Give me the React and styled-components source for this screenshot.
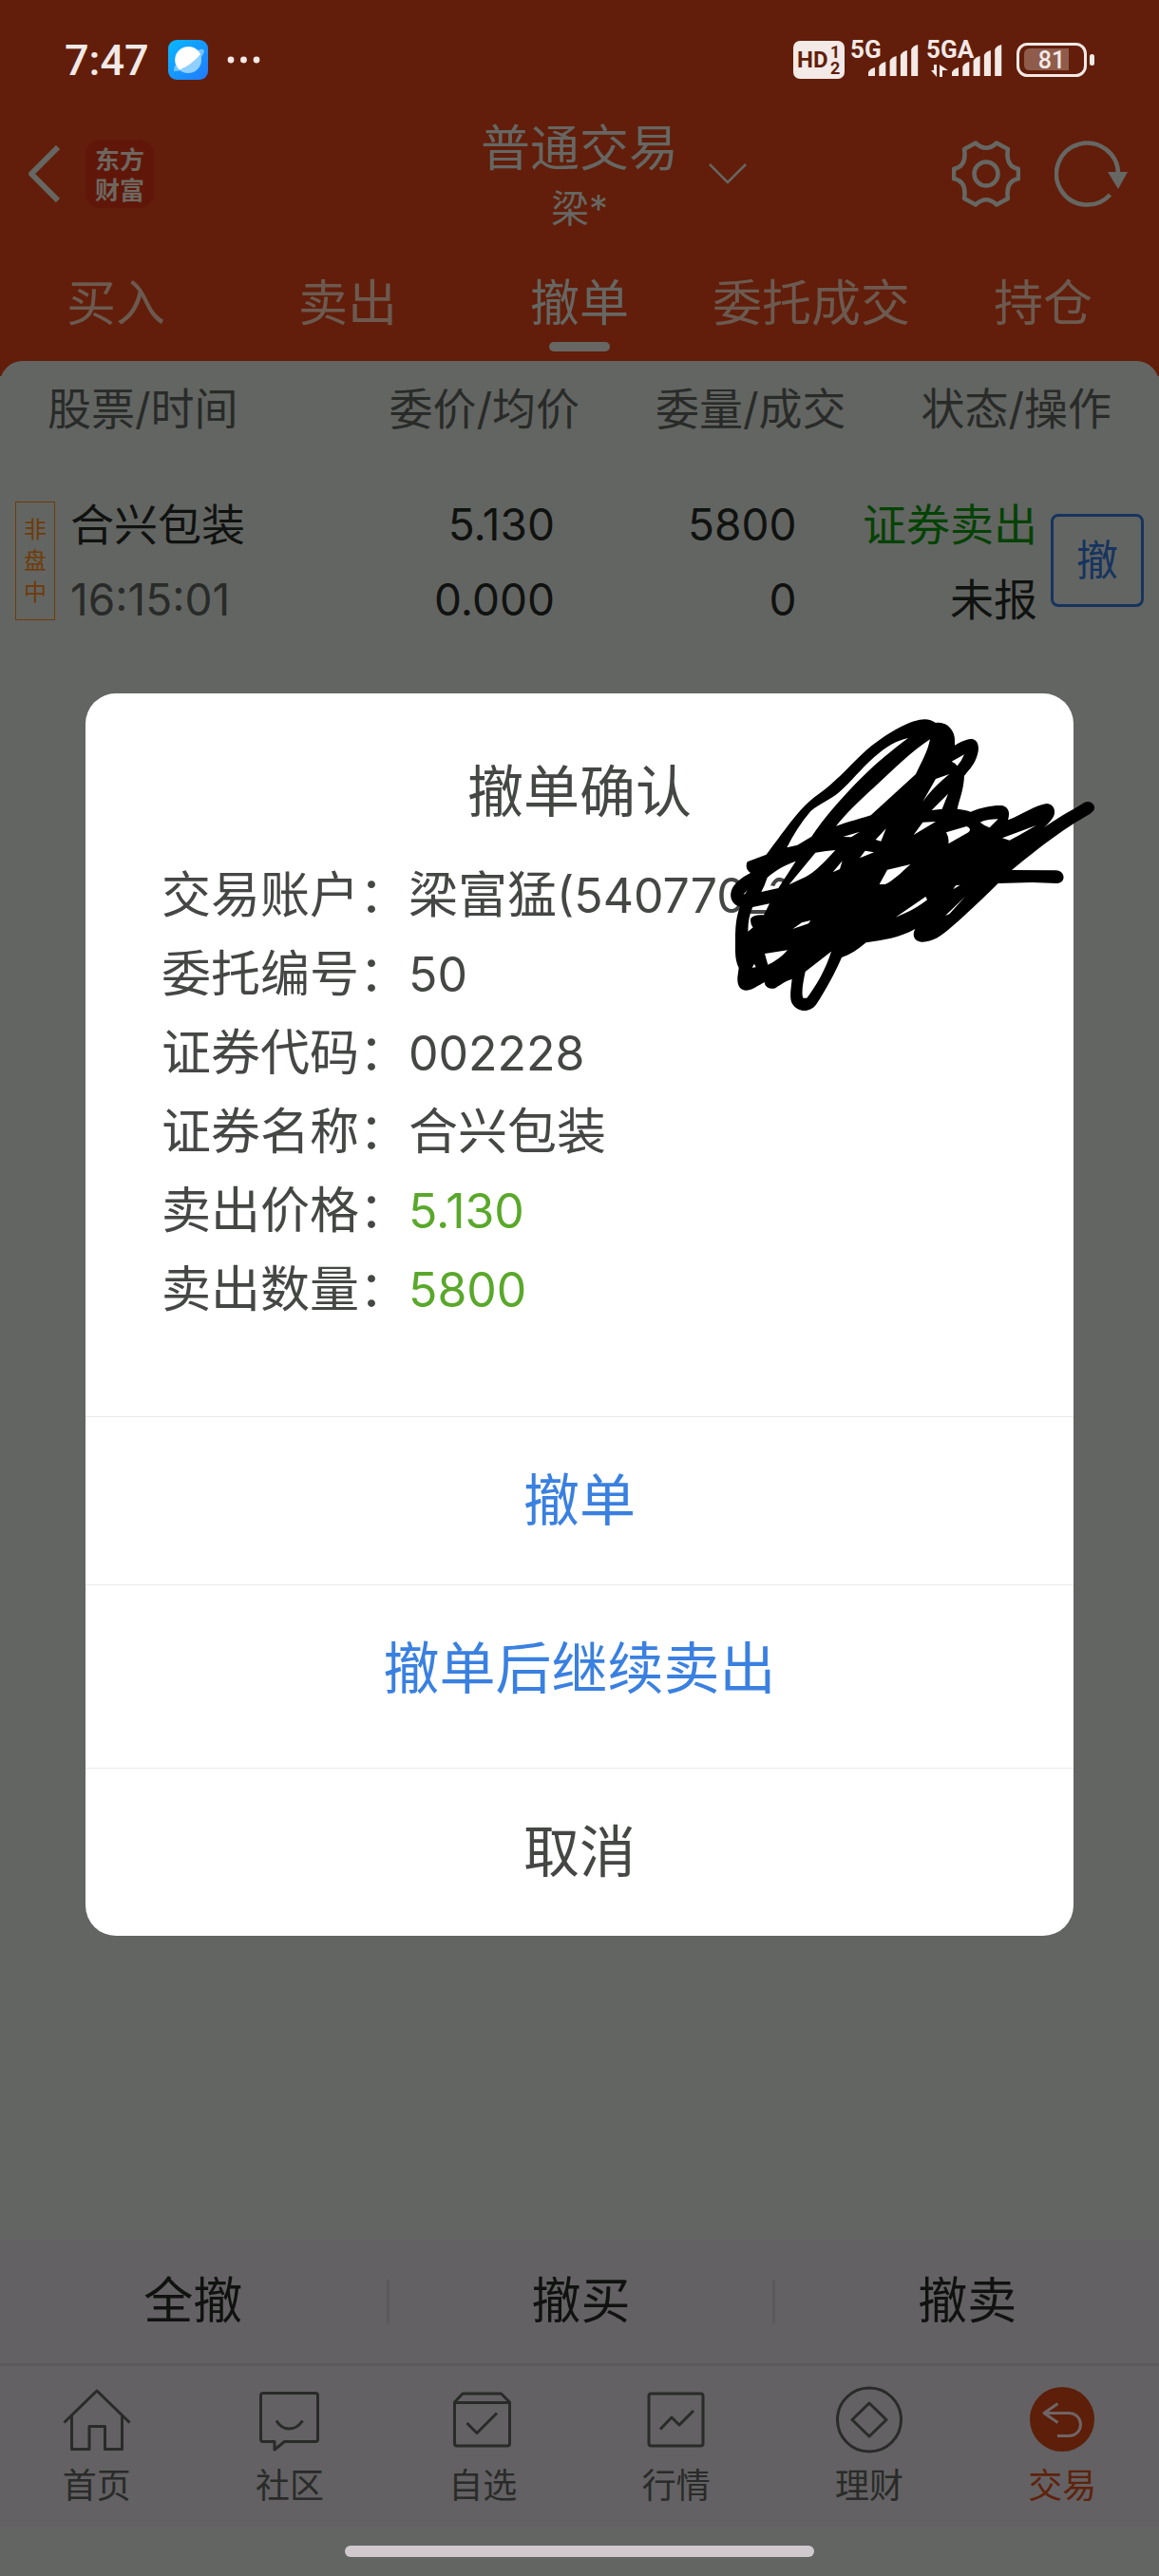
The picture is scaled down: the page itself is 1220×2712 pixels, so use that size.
import React from "react";
import styled, { createGlobalStyle, css } from "styled-components";

const color = {
  brand: "#621e0a",
  surface: "#636562",
  bar: "#636163",
  barLine: "#5b595b",
  onBrand: "#666763",
  onBrandDim: "#6c5a50",
  muted: "#292b29",
  ink: "#101210",
  sell: "#054205",
  link: "#16345f",
  tag: "#6f3b07",
  dialogText: "#444744",
  dialogSell: "#5aa82b",
  dialogLink: "#3a80e0",
  status: "#f3e9e6",
};

const GlobalStyle = createGlobalStyle`
  *, *::before, *::after { box-sizing: border-box; }
  body {
    margin: 0;
    background: ${color.surface};
    color: ${color.ink};
    font-family: Inter, "Noto Sans CJK SC", sans-serif;
  }
  button { font: inherit; color: inherit; background: none; border: 0; padding: 0; }
  svg { display: block; flex: none; }
`;

const Page = styled.div`
  display: flex;
  flex-direction: column;
  min-height: 100vh;
`;

const Top = styled.header`
  background: ${color.brand};
  color: ${color.onBrand};
  padding-bottom: 16px;
`;

const StatusBar = styled.div`
  display: flex;
  align-items: center;
  height: 120px;
  padding: 6px 68px 0;
  color: ${color.status};
  font-family: Roboto, sans-serif;
`;

const Clock = styled.time`
  font-size: 45px;
  font-weight: 500;
  margin-right: 20px;
`;

const StatusIcons = styled.div`
  display: flex;
  align-items: center;
  gap: 6px;
  margin-left: auto;
`;

const MoreDots = styled.svg`
  margin-left: 20px;
`;

const TitleBar = styled.div`
  display: grid;
  grid-template-columns: 1fr auto 1fr;
  align-items: center;
  height: 126px;
`;

const TitleLeft = styled.div`
  display: flex;
  align-items: center;
  gap: 26px;
  padding-left: 28px;
`;

const Logo = styled.div`
  width: 72px;
  height: 72px;
  padding: 4px 0;
  border-radius: 16px;
  background: #601709;
  color: #6e6760;
  font-family: "Noto Sans CJK SC", sans-serif;
  font-size: 26px;
  font-weight: 700;
  line-height: 32px;
  text-align: center;
`;

const TitleText = styled.div`
  text-align: center;
`;

const Title = styled.h1`
  margin: 0;
  font-size: 52px;
  font-weight: 400;
  line-height: 74px;
`;

const Account = styled.div`
  font-size: 40px;
  line-height: 52px;
`;

const TitleRight = styled.div`
  display: flex;
  align-items: center;
  padding: 0 32px;
`;

const Tools = styled.div`
  display: flex;
  gap: 36px;
  margin-left: auto;
`;

const Tabs = styled.nav`
  display: grid;
  grid-template-columns: repeat(5, 1fr);
  padding-top: 42px;
`;

const Tab = styled.button`
  display: flex;
  flex-direction: column;
  align-items: center;
  gap: 8px;
  padding-bottom: 10px;
  font-size: 52px;
  line-height: 64px;
  white-space: nowrap;
  color: ${(p) => (p.$active ? color.onBrand : color.onBrandDim)};

  &::after {
    content: "";
    width: 64px;
    height: 10px;
    border-radius: 5px;
    background: ${(p) => (p.$active ? color.onBrand : "transparent")};
  }
`;

const Content = styled.main`
  flex: 1;
  margin-top: -16px;
  border-radius: 24px 24px 0 0;
  background: ${color.surface};
`;

const Orders = styled.table`
  width: 100%;
  table-layout: fixed;
  border-collapse: collapse;
`;

const HeadCell = styled.th`
  width: ${(p) => p.$width};
  height: 100px;
  padding: 0 ${(p) => p.$end || 0}px 0 ${(p) => p.$start || 0}px;
  font-size: 46px;
  font-weight: 400;
  line-height: 64px;
  text-align: ${(p) => (p.$start ? "left" : "right")};
  white-space: nowrap;
  color: ${color.muted};
`;

const Cell = styled.td`
  height: 220px;
  padding: 0 ${(p) => p.$end || 0}px 0 0;
  text-align: right;
  white-space: nowrap;
`;

const CellRow = styled.div`
  display: flex;
  align-items: center;
  gap: ${(p) => p.$gap}px;
  ${(p) => p.$end && css`justify-content: flex-end;`}
  ${(p) => p.$start && css`padding-left: ${p.$start}px; text-align: left;`}
`;

const Line = styled.span`
  display: block;
  font-size: 46px;
  line-height: 79px;
  color: ${(p) => p.$color || color.ink};
`;

const Lines = styled.div`
  padding-top: 4px;
`;

const Session = styled.span`
  width: 42px;
  padding: 12px 8px;
  border: 1px solid ${color.tag};
  color: ${color.tag};
  font-size: 24px;
  line-height: 33px;
  text-align: center;
  white-space: normal;
`;

const CancelButton = styled.button`
  width: 98px;
  height: 98px;
  border: 3px solid ${color.link};
  border-radius: 8px;
  color: ${color.link};
  font-size: 44px;
  line-height: 64px;
`;

const BulkActions = styled.div`
  display: grid;
  grid-template-columns: repeat(3, 1fr);
  height: 130px;
  padding: 42px 0;
  background: ${color.bar};
`;

const BulkButton = styled.button`
  font-size: 52px;
  line-height: 46px;

  & + & { border-left: 3px solid ${color.barLine}; }
`;

const BottomNav = styled.nav`
  display: grid;
  grid-template-columns: repeat(6, 1fr);
  border-top: 3px solid ${color.barLine};
  background: ${color.bar};
`;

const NavItem = styled.a`
  display: flex;
  flex-direction: column;
  align-items: center;
  gap: 8px;
  padding: 21px 0 18px;
  font-size: 36px;
  line-height: 50px;
  text-decoration: none;
  color: ${(p) => (p.$active ? "#5f220c" : color.muted)};
`;

const HomeArea = styled.div`
  display: flex;
  justify-content: center;
  padding: 20px 0;

  &::after {
    content: "";
    width: 494px;
    height: 12px;
    border-radius: 6px;
    background: #cfc9ce;
  }
`;

const Overlay = styled.div`
  position: fixed;
  inset: 0;
  display: flex;
  align-items: center;
  padding: 56px 90px 0;
`;

const Dialog = styled.section`
  position: relative;
  width: 100%;
  border-radius: 32px;
  background: #fff;
  color: ${color.dialogText};
`;

const DialogBody = styled.div`
  padding: 64px 80px 92px;
`;

const DialogTitle = styled.h2`
  margin: 0 0 27px;
  font-size: 59px;
  font-weight: 400;
  line-height: 80px;
  text-align: center;
`;

const Details = styled.dl`
  display: grid;
  grid-template-columns: 260px 1fr;
  grid-auto-rows: 83px;
  margin: 0;
  font-size: 52px;
  line-height: 83px;
  white-space: nowrap;
`;

const Label = styled.dt``;

const Value = styled.dd`
  margin: 0;
  color: ${(p) => (p.$sell ? color.dialogSell : "inherit")};
`;

const Digits = styled.span`
  font-size: 50px;
  line-height: 50px;
`;

const DialogButton = styled.button`
  display: block;
  width: 100%;
  padding: 48px 0 ${(p) => (p.$tall ? 64 : 48)}px;
  border-top: 1px solid #e9e9e9;
  font-size: 59px;
  line-height: 80px;
  color: ${(p) => (p.$primary ? color.dialogLink : "inherit")};
`;

const Scribble = styled.svg`
  position: absolute;
  top: -11px;
  right: -50px;
  pointer-events: none;
`;

const BrowserIcon = () => (
  <svg width="42" height="42" viewBox="0 0 42 42">
    <defs>
      <linearGradient id="sky" x1="0" y1="0" x2="1" y2="1">
        <stop offset="0" stopColor="#08b8ff" />
        <stop offset="1" stopColor="#2379ff" />
      </linearGradient>
    </defs>
    <rect width="42" height="42" rx="9" fill="url(#sky)" />
    <circle cx="21" cy="21" r="14" fill="#8fd0ff" />
    <path d="M6 33 Q6 27 10 24 L31 11 Q38 8 38 12 Q36 18 31 22 Q16 34 6 33Z" fill="#8fd0ff" opacity=".8" />
    <path d="M12 31.5 A14 14 0 1 1 34 15 Q25 26 12 31.5Z" fill="#fff" />
  </svg>
);

const Dots = () => (
  <MoreDots width="36" height="8" viewBox="0 0 36 8" fill="currentColor">
    <circle cx="4" cy="4" r="3.4" />
    <circle cx="17.5" cy="4" r="3.4" />
    <circle cx="31" cy="4" r="3.4" />
  </MoreDots>
);

const HdBadge = () => (
  <svg width="54" height="40" viewBox="0 0 54 40" fontFamily="Roboto, sans-serif" fontWeight="700" fill={color.brand}>
    <rect width="54" height="40" rx="7" fill={color.status} />
    <text x="4" y="28" fontSize="24">HD</text>
    <text x="39" y="18" fontSize="18">1</text>
    <text x="39" y="35" fontSize="18">2</text>
  </svg>
);

const Signal = ({ label, width, bars, transfer }) => {
  const heights = [9, 15, 21, 27, 33];
  return (
    <svg width={width} height="56" viewBox={`0 -8 ${width} 56`} fill="currentColor">
      <text x="0" y="18" fontSize="26" fontWeight="700" fontFamily="Roboto, sans-serif">{label}</text>
      {heights.map((h, i) => {
        const x = bars + i * 11.3;
        return <path key={h} d={`M${x} 37 v${-(h - 5)} q2 -4 7 -5 v${h} z`} />;
      })}
      {transfer && <path d="M5 31 l6 7 v-13 h-3 v6z M14 25 v13 h3 v-7 h6z" />}
    </svg>
  );
};

const Battery = () => (
  <svg width="82" height="36" viewBox="0 0 82 36">
    <rect x="1.5" y="1.5" width="71" height="33" rx="10" fill="none" stroke={color.status} strokeWidth="3" />
    <path d="M14 6 H55 V29 H14 Q8 29 8 23 V12 Q8 6 14 6Z" fill="#8f5c4c" />
    <rect x="77" y="12" width="5" height="12" rx="2.5" fill={color.status} />
    <text x="37" y="27" fontSize="25" fontWeight="500" textAnchor="middle" fontFamily="Roboto, sans-serif" fill={color.status}>81</text>
  </svg>
);

const BackIcon = () => (
  <svg width="36" height="60" viewBox="0 0 36 60" fill="none" stroke="currentColor" strokeWidth="6">
    <path d="M33 2 L5 30 L33 58" strokeLinejoin="round" />
  </svg>
);

const DownIcon = () => (
  <svg width="40" height="24" viewBox="0 0 40 24" fill="none" stroke="currentColor" strokeWidth="2.5">
    <path d="M1 2 L20 21 L39 2" />
  </svg>
);

const GearIcon = () => (
  <svg width="72" height="72" viewBox="0 0 72 72" fill="none" stroke="currentColor" strokeWidth="4.5" strokeLinejoin="round">
    <path d="M25 3.5 Q36 14 47 3.5 L59 10 Q56 28 70 31 V41 Q56 44 59 62 L47 68.5 Q36 58 25 68.5 L13 62 Q16 44 2 41 V31 Q16 28 13 10Z" />
    <circle cx="36" cy="36" r="12.5" />
  </svg>
);

const RefreshIcon = () => (
  <svg width="78" height="72" viewBox="0 0 78 72" fill="none" stroke="currentColor" strokeWidth="4.5">
    <path d="M67 36 A32.5 32.5 0 1 0 58.5 58" />
    <path d="M56 34 H77 L67 52Z" fill="currentColor" stroke="none" />
  </svg>
);

const navShapes = {
  home: <path d="M1.5 38.5 L36 5 L70.5 38.5 M9.5 31 V66.5 H28 V42.5 H44.5 V66.5 H62.5 V31" />,
  community: (
    <>
      <path d="M8 7.5 H63 Q65.5 7.5 65.5 10 V56 Q65.5 58.5 63 58.5 H30.5 L20 67 V58.5 H8 Q5.5 58.5 5.5 56 V10 Q5.5 7.5 8 7.5Z" />
      <path d="M22 36.5 Q27 45 35.5 45 Q44 45 49.5 36.5" />
    </>
  ),
  watch: (
    <>
      <path d="M6.5 17 L15 8 H55.5 L64.5 17 V60.5 Q64.5 63 62 63 H9 Q6.5 63 6.5 60.5Z M6.5 17.5 H64.5" />
      <path d="M19.5 39 L30 49.5 L51 28.5" />
    </>
  ),
  quotes: (
    <>
      <rect x="7" y="8" width="57" height="55" rx="2.5" />
      <path d="M19 45.5 L31 33 L39 41 L54 26" />
    </>
  ),
  finance: (
    <>
      <circle cx="36" cy="35.5" r="33.5" />
      <path d="M36 18 L54 35.5 L36 53 L18 35.5Z" />
    </>
  ),
  trade: (
    <>
      <circle cx="36" cy="35" r="34" fill="#5d1f09" stroke="none" />
      <path d="M31.5 18.5 L17 28.5 L31.5 38.5 M17 28.5 H43.5 A12 12 0 0 1 43.5 52.5 H31" stroke="#6f6566" />
    </>
  ),
};

const NavIcon = ({ name }) => (
  <svg width="72" height="72" viewBox="0 0 72 72" fill="none" stroke="currentColor" strokeWidth="3" strokeLinejoin="round">
    {navShapes[name]}
  </svg>
);

const scribbleOutline =
  "M140 565 L200 542 C240 490 270 445 310 400 C350 355 380 345 420 305 C460 270 500 220 550 185 C600 150 660 115 700 115 Q720 116 735 126 C770 120 795 150 795 180 L795 197 C815 185 835 177 850 177 C870 180 873 205 867 225 C860 255 840 275 825 293 C823 340 810 365 803 398 Q825 400 845 407 C880 392 920 385 945 387 C970 395 968 415 963 433 C1010 415 1050 385 1085 381 C1112 383 1115 410 1105 425 C1095 440 1080 455 1066 465 C1110 430 1160 405 1205 377 C1225 368 1243 388 1234 402 C1225 415 1200 425 1170 445 C1100 490 1030 545 975 591 L1115 592 C1145 593 1147 632 1118 633 L1040 630 L932 633 C880 685 820 740 780 775 C750 802 720 820 690 818 C665 815 660 795 670 777 C620 805 570 812 515 820 C490 842 465 858 438 867 C415 920 390 965 358 1015 C340 1042 300 1042 283 1015 C272 1000 277 970 281 936 C260 940 240 958 225 965 C205 968 193 955 195 945 C175 955 155 970 138 971 C115 970 108 955 109 930 L113 900 C100 870 102 850 102 810 C102 770 105 735 117 707 C90 700 83 675 90 655 C97 635 120 615 150 600 C135 590 135 575 140 565Z";

const scribbleGaps = [
  "M648 174 C610 182 580 200 540 235 C500 270 470 310 430 345 C400 370 370 380 340 405 C310 440 285 480 265 520 L298 512 L343 485 C380 430 430 370 500 300 C550 250 600 210 648 174Z",
  "M717 178 C660 215 600 275 540 330 C490 375 450 415 420 452 C460 438 500 428 530 418 L672 288 C690 250 710 215 717 178Z",
  "M785 248 L825 226 Q816 248 803 262 Q795 252 785 248Z",
  "M735 303 L778 288 C750 310 715 345 694 375Z",
  "M774 350 L722 402 L755 398Z",
  "M694 440 L735 438 L665 480Z",
  "M768 472 L832 453 Q850 460 838 472 L775 508 Q778 490 768 472Z",
  "M875 440 Q900 430 932 430 L905 457 Q890 452 875 440Z",
  "M945 490 L1052 450 L1000 480 L968 497Z",
  "M442 486 L495 470 L468 487Z",
  "M578 460 L545 495 L562 500Z",
  "M355 536 Q390 530 418 528 C390 560 350 600 325 612 L272 637Z",
  "M293 563 L238 648 L184 660 Q195 640 203 615 C230 590 260 575 293 563Z",
  "M512 530 L540 535 L495 553Z",
  "M582 590 L655 573 C625 600 600 625 575 636 L557 636Z",
  "M440 562 L432 588 L410 598Z",
  "M157 708 L210 697 L192 733 Q160 730 150 745 Q150 765 158 772 L142 785 Q142 740 157 708Z",
  "M312 757 L340 750 L333 760 L283 777Z",
  "M195 855 L267 844 Q240 875 205 890Z",
  "M405 848 C390 900 355 960 328 995 L316 995 C310 980 316 945 323 912Z",
  "M162 887 L167 898 L155 899Z",
  "M790 652 L812 638 L798 640Z",
  "M828 675 L765 735 L778 730Z",
  "M608 740 L703 675 L708 685 C690 700 650 725 608 740Z",
  "M127 668 L140 655 L133 666Z",
].join(" ");

const navItems = [
  ["home", "首页"],
  ["community", "社区"],
  ["watch", "自选"],
  ["quotes", "行情"],
  ["finance", "理财"],
  ["trade", "交易"],
];

export default function App() {
  return (
    <>
      <GlobalStyle />
      <Page>
        <Top>
          <StatusBar>
            <Clock>7:47</Clock>
            <BrowserIcon />
            <Dots />
            <StatusIcons>
              <HdBadge />
              <Signal label="5G" width={74} bars={19} />
              <Signal label="5GA" width={89} bars={27} transfer />
              <Battery />
            </StatusIcons>
          </StatusBar>
          <TitleBar>
            <TitleLeft>
              <button aria-label="返回"><BackIcon /></button>
              <Logo>东方<br />财富</Logo>
            </TitleLeft>
            <TitleText>
              <Title>普通交易</Title>
              <Account>梁*</Account>
            </TitleText>
            <TitleRight>
              <button aria-label="切换账户"><DownIcon /></button>
              <Tools>
                <button aria-label="设置"><GearIcon /></button>
                <button aria-label="刷新"><RefreshIcon /></button>
              </Tools>
            </TitleRight>
          </TitleBar>
          <Tabs>
            {["买入", "卖出", "撤单", "委托成交", "持仓"].map((t) => (
              <Tab key={t} $active={t === "撤单"}>{t}</Tab>
            ))}
          </Tabs>
        </Top>

        <Content>
          <Orders>
            <thead>
              <tr>
                <HeadCell $width="29%" $start={50}>股票/时间</HeadCell>
                <HeadCell $width="21%">委价/均价</HeadCell>
                <HeadCell $width="23%">委量/成交</HeadCell>
                <HeadCell $width="27%" $end={50}>状态/操作</HeadCell>
              </tr>
            </thead>
            <tbody>
              <tr>
                <Cell>
                  <CellRow $gap={16} $start={16}>
                    <Session>非盘中</Session>
                    <Lines>
                      <Line>合兴包装</Line>
                      <Line $color={color.muted}>16:15:01</Line>
                    </Lines>
                  </CellRow>
                </Cell>
                <Cell $end={26}>
                  <Lines>
                    <Line>5.130</Line>
                    <Line>0.000</Line>
                  </Lines>
                </Cell>
                <Cell $end={52}>
                  <Lines>
                    <Line>5800</Line>
                    <Line>0</Line>
                  </Lines>
                </Cell>
                <Cell $end={16}>
                  <CellRow $gap={14} $end>
                    <Lines>
                      <Line $color={color.sell}>证券卖出</Line>
                      <Line>未报</Line>
                    </Lines>
                    <CancelButton>撤</CancelButton>
                  </CellRow>
                </Cell>
              </tr>
            </tbody>
          </Orders>
        </Content>

        <BulkActions>
          <BulkButton>全撤</BulkButton>
          <BulkButton>撤买</BulkButton>
          <BulkButton>撤卖</BulkButton>
        </BulkActions>
        <BottomNav>
          {navItems.map(([name, label]) => (
            <NavItem key={name} href={`#${name}`} $active={name === "trade"}>
              <NavIcon name={name} />
              {label}
            </NavItem>
          ))}
        </BottomNav>
        <HomeArea />
      </Page>

      <Overlay>
        <Dialog role="dialog" aria-modal="true" aria-labelledby="dialog-title">
          <DialogBody>
            <DialogTitle id="dialog-title">撤单确认</DialogTitle>
            <Details>
              <Label>交易账户：</Label>
              <Value>梁富猛<Digits>(540770</Digits></Value>
              <Label>委托编号：</Label>
              <Value><Digits>50</Digits></Value>
              <Label>证券代码：</Label>
              <Value><Digits>002228</Digits></Value>
              <Label>证券名称：</Label>
              <Value>合兴包装</Value>
              <Label>卖出价格：</Label>
              <Value $sell><Digits>5.130</Digits></Value>
              <Label>卖出数量：</Label>
              <Value $sell><Digits>5800</Digits></Value>
            </Details>
          </DialogBody>
          <DialogButton $primary>撤单</DialogButton>
          <DialogButton $primary $tall>撤单后继续卖出</DialogButton>
          <DialogButton>取消</DialogButton>
          <Scribble width="440" height="380" viewBox="0 0 1320 1140" aria-hidden="true">
            <path d="M150 717 H200 V729 H150Z M213 640 Q230 600 262 622 L256 632 Q235 618 226 642Z" fill={color.dialogText} />
            <path d={`${scribbleOutline} ${scribbleGaps}`} fillRule="evenodd" />
          </Scribble>
        </Dialog>
      </Overlay>
    </>
  );
}
